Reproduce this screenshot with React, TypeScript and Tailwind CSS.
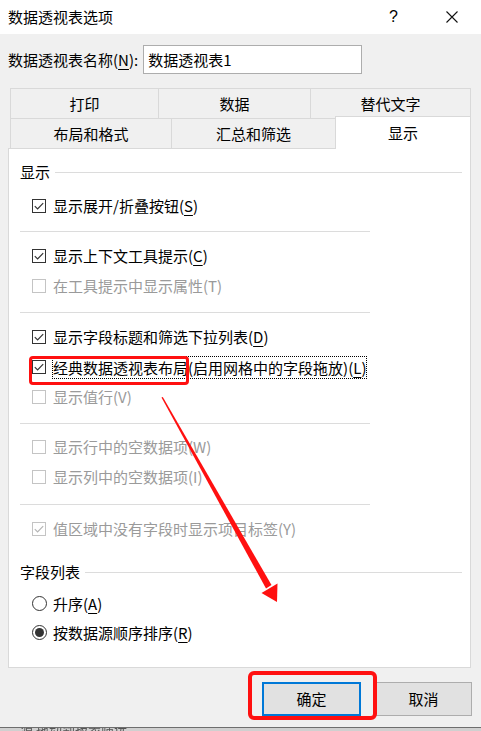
import React from "react";

function U({ children }: { children: React.ReactNode }) {
  return <span className="underline underline-offset-[3px] decoration-[1px]">{children}</span>;
}

function Box({ checked, disabled }: { checked?: boolean; disabled?: boolean }) {
  return (
    <div
      className={`w-[14px] h-[14px] border flex items-center justify-center bg-white shrink-0 ${
        disabled ? "border-[#c4c4c4]" : "border-[#333333]"
      }`}
    >
      {checked && (
        <svg width="12" height="12" viewBox="0 0 12 12">
          <polyline
            points="1.8,6.2 4.6,9 10.2,3.2"
            fill="none"
            stroke={disabled ? "#b4b4b4" : "#333333"}
            strokeWidth="1.2"
          />
        </svg>
      )}
    </div>
  );
}

function CheckRow({
  checked,
  disabled,
  children,
  focus,
}: {
  checked?: boolean;
  disabled?: boolean;
  children: React.ReactNode;
  focus?: boolean;
}) {
  return (
    <div className="h-[30px] flex items-center pl-[23px]">
      <Box checked={checked} disabled={disabled} />
      {focus ? (
        <span className="ml-[6px] border border-dotted border-black px-0 leading-[21px] text-black">
          {children}
        </span>
      ) : (
        <span className={`ml-[7px] leading-[20px] ${disabled ? "text-[#9a9a9a]" : "text-black"}`}>
          {children}
        </span>
      )}
    </div>
  );
}

function Radio({ selected, children }: { selected?: boolean; children: React.ReactNode }) {
  return (
    <div className="h-[29px] flex items-center pl-[23px]">
      <div className="w-[15px] h-[15px] rounded-full border border-[#333333] bg-white flex items-center justify-center shrink-0">
        {selected && <div className="w-[9px] h-[9px] rounded-full bg-[#333333]" />}
      </div>
      <span className="ml-[6px] leading-[20px] text-black">{children}</span>
    </div>
  );
}

function Sep({ mt }: { mt: string }) {
  return <div className={`${mt} ml-[11px] w-[350px] h-px bg-[#dcdcdc]`} />;
}

export default function App() {
  return (
    <div className="relative w-[481px] h-[731px] overflow-hidden bg-[#f0f0f0] text-[15px] text-black font-['Microsoft_YaHei','Noto_Sans_CJK_SC',sans-serif]">
      {/* Title bar */}
      <div className="h-[34px] bg-white flex items-center pl-[8px] relative">
        <span className="leading-[20px]">数据透视表选项</span>
        <div className="flex-1" />
        <span className="leading-[20px] mr-[48px] text-[16px] font-['Liberation_Sans',sans-serif]">?</span>
        <svg width="12" height="12" viewBox="0 0 12 12" className="mr-[23px]">
          <path d="M0.5 0.5 L11.5 11.5 M11.5 0.5 L0.5 11.5" stroke="#111" strokeWidth="1.1" />
        </svg>
      </div>

      {/* Name row */}
      <div className="mt-[11px] h-[29px] flex items-center pl-[8px]">
        <span className="leading-[20px]">
          数据透视表名称(<U>N</U>):
        </span>
        <div className="ml-[5px] w-[219px] h-[29px] border border-[#adadad] bg-white flex items-center pl-[4px]">
          <span className="leading-[20px]">数据透视表1</span>
        </div>
      </div>

      {/* Tabs */}
      <div className="mt-[14px] ml-[10px] w-[461px]">
        <div className="flex h-[30px]">
          <div className="w-[148px] border-l border-t border-[#d9d9d9] flex items-center justify-center">
            <span className="leading-[20px]">打印</span>
          </div>
          <div className="w-[152px] border-l border-t border-[#d9d9d9] flex items-center justify-center">
            <span className="leading-[20px]">数据</span>
          </div>
          <div className="w-[161px] border-l border-t border-r border-[#d9d9d9] flex items-center justify-center">
            <span className="leading-[20px]">替代文字</span>
          </div>
        </div>
        <div className="flex h-[30px] items-end">
          <div className="w-[161px] h-[30px] border-l border-t border-[#d9d9d9] flex items-center justify-center">
            <span className="leading-[20px]">布局和格式</span>
          </div>
          <div className="w-[164px] h-[30px] border-l border-t border-[#d9d9d9] flex items-center justify-center">
            <span className="leading-[20px]">汇总和筛选</span>
          </div>
          <div className="relative z-10 w-[136px] h-[33px] -mb-px bg-white border-l border-t border-r border-[#d9d9d9] flex items-center justify-center">
            <span className="leading-[20px] mt-[-1px]">显示</span>
          </div>
        </div>
      </div>

      {/* Panel */}
      <div className="ml-[8px] w-[463px] h-[520px] border border-[#d9d9d9] bg-white flex flex-col">
        <div className="mt-[13px] flex items-center pl-[11px] pr-[8px] h-[20px]">
          <span className="leading-[20px]">显示</span>
          <div className="flex-1 ml-[5px] h-px bg-[#dcdcdc]" />
        </div>
        <div className="mt-[9px]">
          <CheckRow checked>
            显示展开/折叠按钮(<U>S</U>)
          </CheckRow>
        </div>
        <Sep mt="mt-[10px]" />
        <div className="mt-[9px]">
          <CheckRow checked>
            显示上下文工具提示(<U>C</U>)
          </CheckRow>
          <CheckRow disabled>在工具提示中显示属性(T)</CheckRow>
        </div>
        <Sep mt="mt-[11px]" />
        <div className="mt-[9px]">
          <CheckRow checked>
            显示字段标题和筛选下拉列表(<U>D</U>)
          </CheckRow>
          <CheckRow checked focus>
            经典数据透视表布局(启用网格中的字段拖放)(<U>L</U>)
          </CheckRow>
          <CheckRow disabled>显示值行(V)</CheckRow>
        </div>
        <Sep mt="mt-[11px]" />
        <div className="mt-[8px]">
          <CheckRow disabled>显示行中的空数据项(W)</CheckRow>
          <CheckRow disabled>显示列中的空数据项(I)</CheckRow>
        </div>
        <Sep mt="mt-[12px]" />
        <div className="mt-[9px]">
          <CheckRow checked disabled>
            值区域中没有字段时显示项目标签(Y)
          </CheckRow>
        </div>
        <div className="mt-[18px] flex items-center pl-[11px] pr-[8px] h-[20px]">
          <span className="leading-[20px]">字段列表</span>
          <div className="flex-1 ml-[5px] h-px bg-[#dcdcdc]" />
        </div>
        <div className="mt-[7px]">
          <Radio>
            升序(<U>A</U>)
          </Radio>
          <Radio selected>
            按数据源顺序排序(<U>R</U>)
          </Radio>
        </div>
      </div>

      {/* Buttons */}
      <div className="mt-[14px] flex justify-end pr-[9px] gap-[14px]">
        <div className="w-[99px] h-[34px] bg-[#e1e1e1] border-2 border-[#0078d7] flex items-center justify-center">
          <span className="leading-[20px]">确定</span>
        </div>
        <div className="w-[97px] h-[34px] bg-[#e1e1e1] border border-[#adadad] flex items-center justify-center">
          <span className="leading-[20px]">取消</span>
        </div>
      </div>

      {/* Underlying window strip */}
      <div className="mt-[11px] h-[6px] border-t border-[#6e6e6e] bg-[#d0d0d0] overflow-hidden pl-[20px]">
        <div className="text-[13px] leading-[13px] -mt-[6px] text-[#555] blur-[0.5px]">
          源 拖动到报表筛选
        </div>
      </div>

      {/* Annotations */}
      <div className="absolute left-[29px] top-[356px] w-[160px] h-[29px] border-[3px] border-[#ff1010] rounded-[4px] pointer-events-none" />
      <div className="absolute left-[248px] top-[671px] w-[129px] h-[49px] border-[4px] border-[#ff1010] rounded-[6px] pointer-events-none" />
      <svg className="absolute left-0 top-0 pointer-events-none" width="481" height="731" viewBox="0 0 481 731">
        <polygon points="161.5,397.5 162.8,397 271.5,585 266,588.5" fill="#ff1010" />
        <polygon points="261.5,593 277.5,583.5 277,602" fill="#ff1010" />
      </svg>
    </div>
  );
}
